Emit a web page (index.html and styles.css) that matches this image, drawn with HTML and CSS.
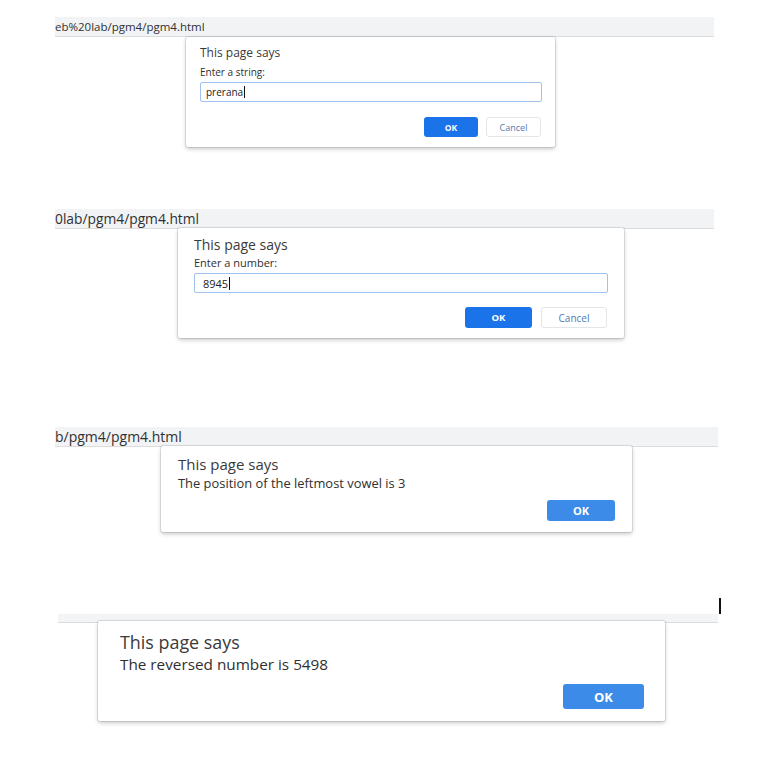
FILE: index.html
```html
<!DOCTYPE html>
<html lang="en">
<head>
<meta charset="utf-8">
<title>pgm4 dialogs</title>
<link rel="stylesheet" href="styles.css">
</head>
<body>
  <section class="panel p1">
    <div class="bar"><span class="url">eb%20lab/pgm4/pgm4.html</span></div>
    <div class="dialog">
      <div class="title">This page says</div>
      <div class="msg">Enter a string:</div>
      <div class="input"><span class="val">prerana</span><span class="caret"></span></div>
      <div class="actions">
        <span class="btn ok">OK</span>
        <span class="btn cancel">Cancel</span>
      </div>
    </div>
  </section>

  <section class="panel p2">
    <div class="bar"><span class="url">0lab/pgm4/pgm4.html</span></div>
    <div class="dialog">
      <div class="title">This page says</div>
      <div class="msg">Enter a number:</div>
      <div class="input"><span class="val">8945</span><span class="caret"></span></div>
      <div class="actions">
        <span class="btn ok">OK</span>
        <span class="btn cancel">Cancel</span>
      </div>
    </div>
  </section>

  <section class="panel p3">
    <div class="bar"><span class="url">b/pgm4/pgm4.html</span></div>
    <div class="dialog">
      <div class="title">This page says</div>
      <div class="msg">The position of the leftmost vowel is 3</div>
      <div class="actions">
        <span class="btn ok">OK</span>
      </div>
    </div>
  </section>

  <section class="panel p4">
    <div class="cursor-row"><span class="cursor"></span></div>
    <div class="bar"></div>
    <div class="dialog">
      <div class="title">This page says</div>
      <div class="msg">The reversed number is 5498</div>
      <div class="actions">
        <span class="btn ok">OK</span>
      </div>
    </div>
  </section>
</body>
</html>
```

FILE: styles.css
```css
html, body {
  margin: 0;
  padding: 0;
  background: #ffffff;
}
body {
  width: 768px;
  height: 772px;
  overflow: hidden;
  font-family: "Open Sans", "Noto Sans", sans-serif;
  color: #2b2b2b;
}

.panel {
  display: flex;
  flex-direction: column;
  align-items: flex-start;
}

.bar {
  box-sizing: border-box;
  background: #f1f3f4;
  border-bottom: 1px solid #dcdcdc;
  color: #303134;
  white-space: nowrap;
  overflow: hidden;
  display: flex;
  align-items: center;
}

.dialog {
  box-sizing: border-box;
  background: #ffffff;
  border-radius: 2px;
  box-shadow: 0 0 0 1px rgba(0, 0, 0, 0.09), 0 2px 4px rgba(0, 0, 0, 0.22);
  display: flex;
  flex-direction: column;
  align-items: stretch;
}

.title { color: #3a3a3a; white-space: nowrap; }
.msg { color: #2f2f2f; white-space: nowrap; }

.input {
  box-sizing: border-box;
  border: 1px solid #9fc2ee;
  border-radius: 2px;
  display: flex;
  align-items: center;
  color: #222;
}
.caret {
  display: inline-block;
  width: 1px;
  background: #111;
  margin-left: 1px;
}

.actions {
  display: flex;
  justify-content: flex-end;
}
.btn {
  box-sizing: border-box;
  display: flex;
  align-items: center;
  justify-content: center;
  border-radius: 3px;
}
.ok {
  background: #1a73e8;
  color: #ffffff;
  font-weight: 700;
}
.cancel {
  background: #ffffff;
  border: 1px solid #e3e5e8;
  color: #4f79b4;
}

/* ---------- panel 1 ---------- */
.p1 { margin-top: 17px; }
.p1 .bar { margin-left: 55px; width: 659px; height: 20px; font-size: 11.5px; }
.p1 .dialog {
  margin-left: 186px;
  width: 369px;
  height: 110px;
  padding: 8px 13px 10px 14px;
}
.p1 .title { font-size: 12px; line-height: 16px; }
.p1 .msg { font-size: 10px; line-height: 14px; margin-top: 4px; }
.p1 .input { height: 20px; margin-top: 3px; padding-left: 5px; font-size: 10px; }
.p1 .caret { height: 12px; }
.p1 .actions { margin-top: 15px; gap: 8px; padding-right: 1px; }
.p1 .btn { height: 20px; font-size: 8.5px; }
.p1 .ok { width: 54px; }
.p1 .cancel { width: 55px; font-size: 9px; }

/* ---------- panel 2 ---------- */
.p2 { margin-top: 62px; }
.p2 .bar { margin-left: 55px; width: 659px; height: 20px; font-size: 13.8px; }
.p2 .dialog {
  margin-left: 178px;
  margin-top: -1px;
  width: 446px;
  height: 110px;
  padding: 8px 16px 10px 16px;
}
.p2 .title { font-size: 14px; line-height: 18px; }
.p2 .msg { font-size: 11px; line-height: 14px; margin-top: 2px; }
.p2 .input { height: 20px; margin-top: 3px; padding-left: 8px; font-size: 11px; }
.p2 .caret { height: 13px; }
.p2 .actions { margin-top: 14px; gap: 9px; padding-right: 1px; }
.p2 .btn { height: 21px; font-size: 9.5px; }
.p2 .ok { width: 67px; }
.p2 .cancel { width: 66px; font-size: 10px; }

/* ---------- panel 3 ---------- */
.p3 { margin-top: 89px; }
.p3 .bar { margin-left: 55px; width: 663px; height: 20px; font-size: 14px; }
.p3 .dialog {
  margin-left: 161px;
  margin-top: -1px;
  width: 471px;
  height: 86px;
  padding: 8px 17px 11px 17px;
}
.p3 .title { font-size: 15px; line-height: 20px; }
.p3 .msg { font-size: 12.9px; line-height: 16px; margin-top: 1px; }
.p3 .actions { margin-top: 9px; }
.p3 .btn { height: 21px; font-size: 11px; }
.p3 .ok { width: 68px; background: #3d8be8; }

/* ---------- panel 4 ---------- */
.p4 { margin-top: 66px; }
.cursor-row { height: 16px; width: 768px; display: flex; }
.cursor { margin-left: 719px; width: 2px; height: 16px; background: #111; }
.p4 .bar { margin-left: 58px; width: 660px; height: 9px; background: #f3f4f5; }
.p4 .dialog {
  margin-left: 98px;
  margin-top: -2px;
  width: 567px;
  height: 100px;
  padding: 10px 21px 12px 22px;
}
.p4 .title { font-size: 17.9px; line-height: 22px; }
.p4 .msg { font-size: 15.3px; line-height: 20px; margin-top: 1px; }
.p4 .actions { margin-top: 10px; }
.p4 .btn { height: 25px; font-size: 13px; }
.p4 .ok { width: 81px; background: #3d8be8; }
```
